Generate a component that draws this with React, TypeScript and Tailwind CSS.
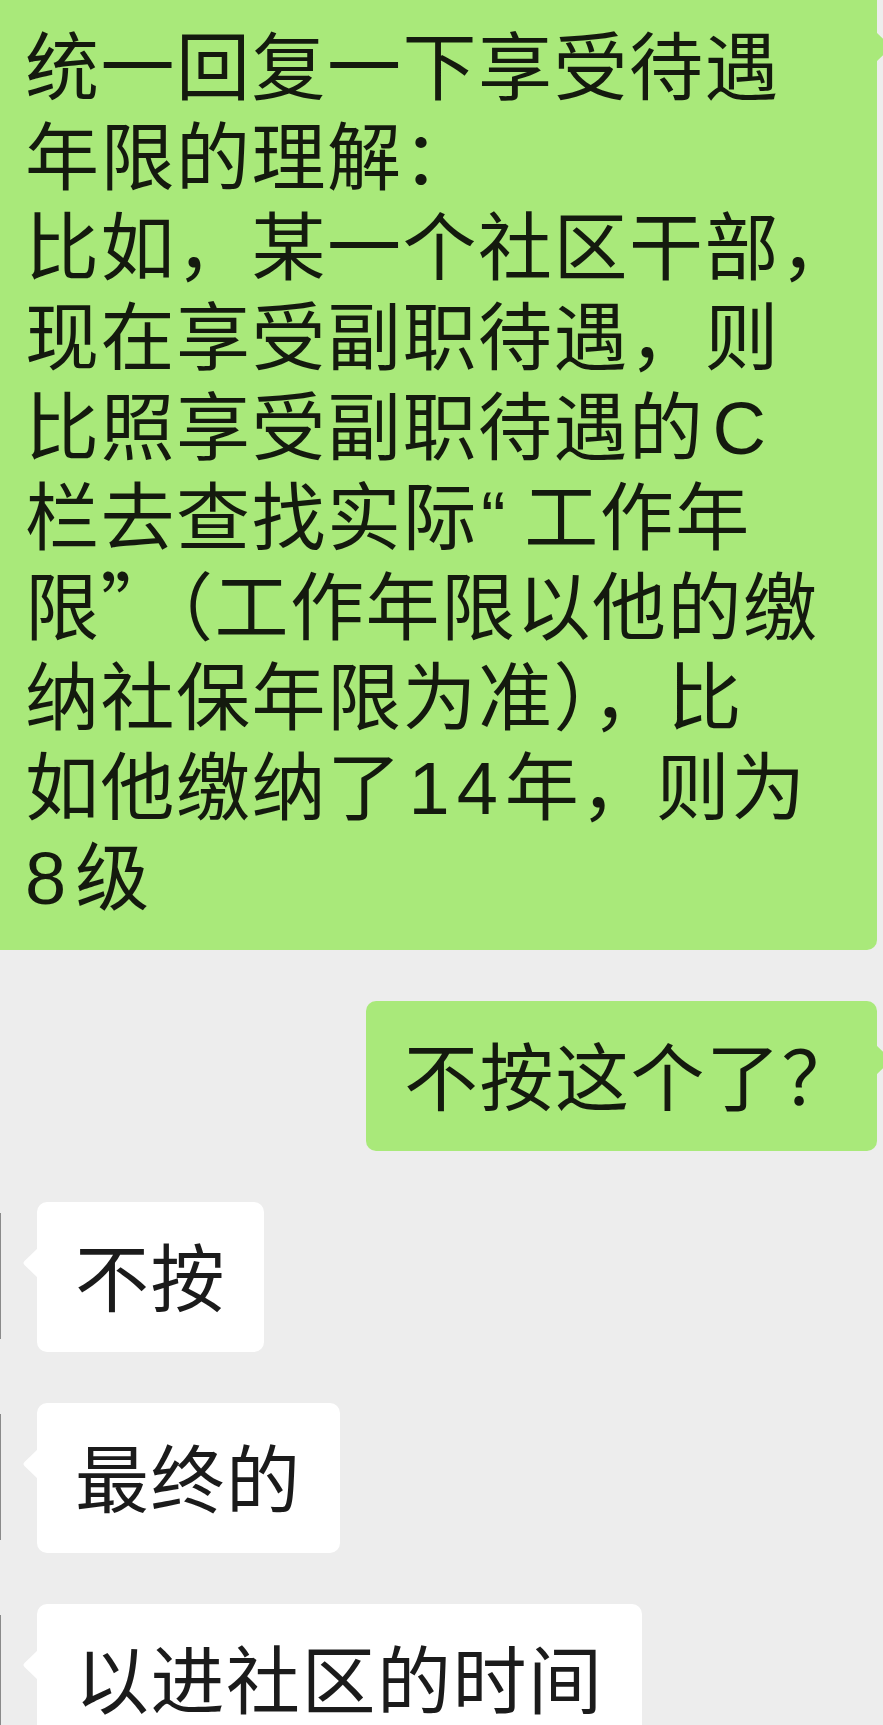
import React from "react";

const FONT = "font-['Noto_Sans_CJK_SC','Noto_Sans_CJK_JP',sans-serif]";
const LAT = "font-['Liberation_Sans','Noto_Sans_CJK_SC',sans-serif] leading-[0px]";

const lines: React.ReactNode[] = [
  "统一回复一下享受待遇",
  "年限的理解：",
  "比如，某一个社区干部，",
  "现在享受副职待遇，则",
  <>
    比照享受副职待遇的<span className={`${LAT} ml-[8px]`}>C</span>
  </>,
  <>
    栏去查找实际<span className={`${LAT} ml-[3px] mr-[17px]`}>“</span>工作年
  </>,
  "限”（工作年限以他的缴",
  "纳社保年限为准），比",
  <>
    如他缴纳了<span className={`${LAT} ml-[6px] tracking-[7px]`}>14</span>年，则为
  </>,
  <>
    <span className={`${LAT} tracking-[9px]`}>8</span>级
  </>,
];

function TailRight({ color, top }: { color: string; top: string }) {
  return (
    <svg
      className={`absolute right-[-15px] ${top}`}
      width="16"
      height="30"
      viewBox="0 0 16 30"
    >
      <path d="M0 0 L13.5 13 Q15.5 15 13.5 17 L0 30 Z" fill={color} />
    </svg>
  );
}

function TailLeft({ top }: { top: string }) {
  return (
    <svg
      className={`absolute left-[-15px] ${top}`}
      width="16"
      height="30"
      viewBox="0 0 16 30"
    >
      <path d="M16 0 L2.5 13 Q0.5 15 2.5 17 L16 30 Z" fill="#ffffff" />
    </svg>
  );
}

function LeftMsg({ text }: { text: string }) {
  return (
    <div className="flex items-start">
      <div className="mt-[11px] h-[126px] w-[1px] bg-[#8a8a8a]" />
      <div className="relative ml-[36px] rounded-[10px] bg-white pl-[38px] pr-[38px] pt-[27px] pb-[33px] text-[74px] leading-[90px] tracking-[1.5px] text-[#1b1b1b] whitespace-nowrap">
        <TailLeft top="top-[46px]" />
        {text}
      </div>
    </div>
  );
}

export default function App() {
  return (
    <div
      className={`${FONT} h-[1725px] w-[883px] overflow-hidden bg-[#ededed]`}
    >
      <div className="flex flex-col gap-[51px] pr-[6px]">
        <div className="relative mt-[-10px] rounded-br-[10px] bg-[#a9e97a] pl-[25px] pr-[20px] pt-[27px] pb-[33px] text-[74px] leading-[90px] tracking-[1.5px] text-[#141a0e]">
          <TailRight color="#a9e97a" top="top-[42px]" />
          {lines.map((l, i) => (
            <div key={i} className="h-[90px] whitespace-nowrap">
              {l}
            </div>
          ))}
        </div>

        <div className="flex justify-end">
          <div className="relative rounded-[10px] bg-[#a9e97a] pl-[38px] pr-[20px] pt-[27px] pb-[33px] text-[74px] leading-[90px] tracking-[1.5px] text-[#141a0e] whitespace-nowrap">
            <TailRight color="#a9e97a" top="top-[44px]" />
            不按这个了？
          </div>
        </div>

        <LeftMsg text="不按" />
        <LeftMsg text="最终的" />
        <LeftMsg text="以进社区的时间" />
      </div>
    </div>
  );
}
